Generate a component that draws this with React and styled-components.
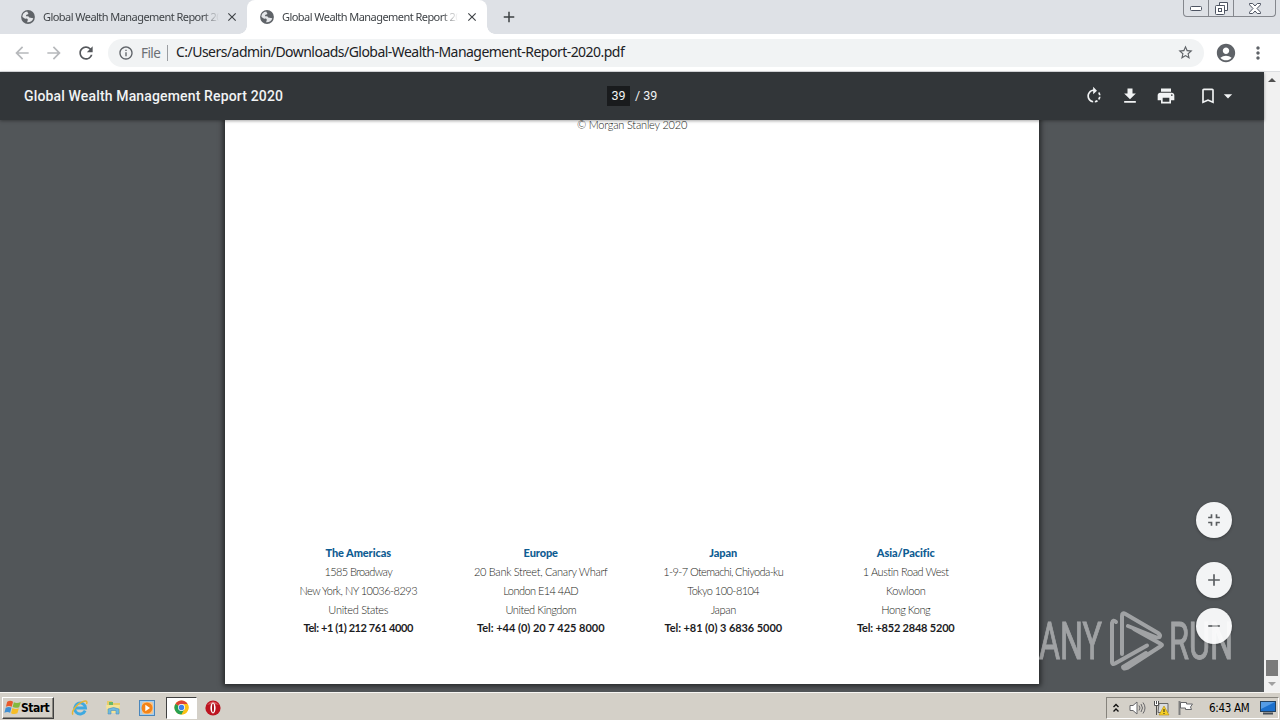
import React from "react";
import styled, { createGlobalStyle } from "styled-components";
import {
  MdArrowBack,
  MdArrowForward,
  MdRefresh,
  MdInfoOutline,
  MdStarBorder,
  MdAccountCircle,
  MdMoreVert,
  MdRotateRight,
  MdFileDownload,
  MdPrint,
  MdBookmarkBorder,
  MdArrowDropDown,
  MdFullscreenExit,
  MdAdd,
  MdRemove,
  MdClose
} from "react-icons/md";

const GlobalStyle = createGlobalStyle`
  * {
    box-sizing: border-box;
  }

  body {
    margin: 0;
    overflow: hidden;
  }

  svg {
    display: block;
    flex: none;
  }
`;

const Screen = styled.div`
  display: flex;
  flex-direction: column;
  width: 1280px;
  height: 720px;
  font-family: "Noto Sans", sans-serif;
  background: #525659;
`;

const TabStrip = styled.div`
  display: flex;
  height: 34px;
  background: #dee1e6;
`;

const Tab = styled.div`
  position: relative;
  display: flex;
  align-items: center;
  width: ${props => props.$width}px;
  padding: 0 8px 0 ${props => props.$left}px;
  color: #3f4347;
  background: ${props => (props.$active ? "#fff" : "transparent")};
  border-radius: 8px 8px 0 0;

  &::before,
  &::after {
    content: "";
    display: ${props => (props.$active ? "block" : "none")};
    position: absolute;
    bottom: 0;
    width: 8px;
    height: 8px;
  }

  &::before {
    left: -8px;
    background: radial-gradient(circle at 0 0, transparent 7.5px, #fff 8px);
  }

  &::after {
    right: -8px;
    background: radial-gradient(circle at 100% 0, transparent 7.5px, #fff 8px);
  }
`;

const TabTitle = styled.span`
  flex: 1;
  margin: 0 6px 0 8px;
  overflow: hidden;
  white-space: nowrap;
  font-size: 11px;
  letter-spacing: -0.55px;
  line-height: 18px;
  mask-image: linear-gradient(to right, #000 160px, transparent 176px);
`;

const NewTab = styled.div`
  display: flex;
  align-items: center;
  margin-left: 13px;
  color: #3c4043;
`;

const WindowButtons = styled.div`
  display: flex;
  width: 93px;
  height: 17px;
  margin: 0 4px 0 auto;
  border: 1px solid #84878d;
  border-top: 0;
  border-radius: 0 0 4px 4px;
`;

const WindowButton = styled.div`
  display: flex;
  align-items: center;
  justify-content: center;
  width: ${props => props.$width}px;
  border-right: ${props => (props.$last ? "0" : "1px solid #84878d")};
`;

const Toolbar = styled.div`
  display: flex;
  align-items: center;
  height: 38px;
  padding: 0 12px;
  color: #5f6368;
  background: #fff;
  border-bottom: 1px solid #dcdee1;
`;

const NavButton = styled.div`
  width: 20px;
  margin-right: 12px;
  color: ${props => (props.$disabled ? "#b7b9bc" : "#55585c")};
`;

const AddressBar = styled.div`
  display: flex;
  align-items: center;
  width: 1096px;
  height: 28px;
  padding: 0 10px;
  border-radius: 14px;
  background: #f1f3f4;
  font-size: 14px;
`;

const Scheme = styled.span`
  width: 19px;
  margin-left: 7px;
  color: #6b6f74;
  font-size: 13.5px;
  letter-spacing: -0.6px;
`;

const Separator = styled.span`
  width: 1px;
  height: 16px;
  margin: 0 8px 0 7px;
  background: #9a9da1;
`;

const Url = styled.span`
  flex: 1;
  color: #202124;
  white-space: nowrap;
  line-height: 20px;
  padding-bottom: 1px;
  letter-spacing: -0.53px;
`;

const Account = styled.div`
  margin: 0 11px;
`;

const Viewer = styled.div`
  display: flex;
  height: 620px;
`;

const ViewerMain = styled.div`
  position: relative;
  display: flex;
  flex-direction: column;
  width: 1264px;
`;

const PdfBar = styled.div`
  z-index: 1;
  display: grid;
  grid-template-columns: 607px 1fr auto;
  align-items: center;
  height: 48px;
  padding-right: 26px;
  color: #f1f3f4;
  background: #323639;
  box-shadow: 0 1px 3px rgba(0, 0, 0, 0.35);
  font-family: Roboto, sans-serif;
`;

const PdfTitle = styled.div`
  padding-left: 24px;
  font-size: 14px;
  font-weight: 500;
  letter-spacing: 0.15px;
`;

const PageSelector = styled.div`
  display: flex;
  align-items: center;
  font-size: 12.5px;
  line-height: 20px;
`;

const PageNumber = styled.span`
  width: 23px;
  margin-right: 5px;
  text-align: center;
  background: #191b1d;
`;

const PageCount = styled.span`
  padding-bottom: 1px;
`;

const PdfActions = styled.div`
  display: flex;
  align-items: center;
`;

const Action = styled.div`
  margin-left: ${props => props.$gap}px;
`;

const Document = styled.div`
  height: 572px;
  overflow: hidden;
  padding: 0 225px 8px;
  background: #525659;
`;

const Page = styled.div`
  display: flex;
  flex-direction: column;
  justify-content: space-between;
  width: 814px;
  height: 564px;
  padding: 0 42px 46px;
  color: #1d1e20;
  background: #fff;
  box-shadow: 0 0 5px 2px rgba(0, 0, 0, 0.55);
  font-family: Lato, sans-serif;
  font-size: 11px;
  font-weight: 300;
  text-align: center;
`;

const Copyright = styled.div`
  height: 20px;
  line-height: 9px;
  letter-spacing: -0.2px;
`;

const Offices = styled.div`
  display: grid;
  grid-template-columns: repeat(4, 182.5px);
`;

const Office = styled.div`
  line-height: 18.7px;
  white-space: nowrap;
`;

const Region = styled.div`
  color: #0e5c92;
  font-weight: 900;
  letter-spacing: -0.1px;
`;

const Address = styled.div`
  letter-spacing: ${props => props.$spacing}px;
`;

const Phone = styled.div`
  color: #1c1c1e;
  font-weight: 700;
  letter-spacing: ${props => props.$spacing}px;
`;

const ZoomControls = styled.div`
  position: absolute;
  right: 32px;
  bottom: 48px;
  display: flex;
  flex-direction: column;
  gap: 10px;
`;

const ZoomButton = styled.div`
  display: flex;
  align-items: center;
  justify-content: center;
  width: 36px;
  height: 36px;
  margin-bottom: ${props => (props.$spaced ? 14 : 0)}px;
  border-radius: 50%;
  color: #5a5d60;
  background: #f3f4f5;
  box-shadow: 0 1px 3px rgba(0, 0, 0, 0.3);
`;

const WatermarkBox = styled.div`
  position: absolute;
  left: 1036px;
  top: 535px;
`;

const Scrollbar = styled.div`
  display: flex;
  flex-direction: column;
  align-items: center;
  width: 16px;
  background: #f1f1f1;
`;

const Track = styled.div`
  display: flex;
  align-items: flex-end;
  flex: 1;
  width: 12px;
`;

const Thumb = styled.div`
  width: 12px;
  height: 16px;
  background: #7b7b7b;
`;

const ScrollArrow = styled.div`
  display: flex;
  align-items: center;
  height: 16px;
`;

const Taskbar = styled.div`
  display: flex;
  align-items: center;
  height: 28px;
  padding: 3px 1px 1px 2px;
  background: #d4d0c8;
  border-top: 1px solid #f6f5f2;
`;

const StartButton = styled.div`
  display: flex;
  align-items: center;
  width: 52px;
  height: 22px;
  padding-left: 1px;
  border: 1px solid;
  border-color: #fff #404040 #404040 #fff;
  box-shadow: inset -1px -1px #8a8780;
  color: #000;
  font: bold 12px "DejaVu Sans Condensed", "DejaVu Sans", sans-serif;
  letter-spacing: -0.5px;
`;

const QuickLaunch = styled.div`
  display: flex;
  align-items: center;
  margin-left: 9px;
`;

const Launcher = styled.div`
  display: flex;
  align-items: center;
  justify-content: center;
  width: ${props => (props.$active ? 31 : 33.5)}px;
  height: 22px;
  margin-left: ${props => (props.$active ? 2 : 0)}px;
  background: ${props => (props.$active ? "#fff" : "transparent")};
  border: ${props => (props.$active ? "1px solid" : "0")};
  border-color: #404040 #fff #fff #404040;
`;

const Tray = styled.div`
  display: flex;
  align-items: center;
  width: 173px;
  height: 22px;
  margin-left: auto;
  padding-left: 6px;
  border: 1px solid;
  border-color: #86837c #fff #fff #86837c;
`;

const TrayIcon = styled.div`
  margin-right: ${props => props.$gap}px;
`;

const Clock = styled.span`
  width: 42px;
  margin-right: 9px;
  color: #000;
  font: 11.5px "DejaVu Sans Condensed", "DejaVu Sans", sans-serif;
  letter-spacing: -0.3px;
  white-space: nowrap;
`;

const offices = [
  {
    region: "The Americas",
    address: [
      { text: "1585 Broadway", spacing: -0.6 },
      { text: "New York, NY 10036-8293", spacing: -0.52 },
      { text: "United States", spacing: -0.3 }
    ],
    phone: "Tel: +1 (1) 212 761 4000",
    phoneSpacing: -0.4
  },
  {
    region: "Europe",
    address: [
      { text: "20 Bank Street, Canary Wharf", spacing: -0.3 },
      { text: "London E14 4AD", spacing: -0.55 },
      { text: "United Kingdom", spacing: -0.45 }
    ],
    phone: "Tel: +44 (0) 20 7 425 8000",
    phoneSpacing: -0.02
  },
  {
    region: "Japan",
    address: [
      { text: "1-9-7 Otemachi, Chiyoda-ku", spacing: -0.62 },
      { text: "Tokyo 100-8104", spacing: -0.55 },
      { text: "Japan", spacing: -0.4 }
    ],
    phone: "Tel: +81 (0) 3 6836 5000",
    phoneSpacing: -0.06
  },
  {
    region: "Asia/Pacific",
    address: [
      { text: "1 Austin Road West", spacing: -0.42 },
      { text: "Kowloon", spacing: -0.3 },
      { text: "Hong Kong", spacing: -0.5 }
    ],
    phone: "Tel: +852 2848 5200",
    phoneSpacing: -0.2
  }
];

const Globe = () => (
  <svg width="14" height="14" viewBox="0 0 14 14">
    <circle cx="7" cy="7" r="6.9" fill="#5f6368" />
    <path
      d="M6.2 1.6c-2.9.4-4.9 2.6-4.7 5.4l2.6 1.8 1.9-.3.9 1.3-.8 2.5c2.8.4 5.5-1.4 6.2-4.1L10.8 8 8.2 7.6 7.3 6.2H5.1V4.9L7.5 4z"
      fill="#e4e6e9"
    />
  </svg>
);

const MinimizeGlyph = () => (
  <svg width="12" height="5" viewBox="0 0 12 5">
    <rect x=".5" y=".5" width="11" height="4" rx="1" fill="#fff" stroke="#4d5462" />
  </svg>
);

const RestoreGlyph = () => (
  <svg width="13" height="13" viewBox="0 0 13 13" fill="#fff" stroke="#4d5462">
    <path d="M4.5.5h8v8h-3v-5h-5z" />
    <rect x=".5" y="3.5" width="9" height="9" rx="1" />
    <rect x="3.5" y="6.5" width="3" height="3" />
  </svg>
);

const CloseGlyph = () => (
  <svg width="12" height="11" viewBox="0 0 12 11">
    <path
      d="M.5.5h3.2L6 3 8.3.5h3.2v1.3L8 5.5l3.5 3.7v1.3H8.3L6 8l-2.3 2.5H.5V9.2L4 5.5.5 1.8z"
      fill="#fff"
      stroke="#4d5462"
    />
  </svg>
);

const WindowsFlag = () => (
  <svg width="17" height="17" viewBox="0 0 16 16">
    <path d="M3 2.500Q6 .8 8.500 2.500L7.300 7.200Q4.500 5.800 1.800 7.300z" fill="#e8592b" />
    <path d="M9.300 3Q12 4.400 15.800 2.800L14.300 7.700Q11 9 8.100 7.600z" fill="#83b93e" />
    <path d="M1.600 8.200Q4.500 6.800 7 8.100L5.800 13Q3.200 11.600.4 13z" fill="#3f8fd3" />
    <path d="M7.900 8.500Q11 10 14 8.700L12.600 13.500Q9.500 15 6.600 13.400z" fill="#f6bd26" />
  </svg>
);

const InternetExplorer = () => (
  <svg width="18" height="18" viewBox="0 0 18 18" fill="none">
    <path d="M14.2 11.6A5.5 5.5 0 1 1 14.6 9H5" stroke="#3fa9e0" strokeWidth="2.8" />
    <path d="M2.2 15.5C-1 14 6 4 13 2.2c3-.7 3.500.8 2.500 2.800" stroke="#e5b536" strokeWidth="1.5" />
  </svg>
);

const Explorer = () => (
  <svg width="17" height="17" viewBox="0 0 17 17">
    <path d="M2 2h5l1 2h7v10H2z" fill="#e8cc69" />
    <path d="M4 3h4v4H4z" fill="#68b869" />
    <path d="M1 6h14l-1 8H2z" fill="#f5e396" />
    <path d="M3 15v-5q5.500-3 11 0v5h-3v-3.500H6V15z" fill="#70b9df" stroke="#4d92bd" strokeWidth=".6" />
  </svg>
);

const MediaPlayer = () => (
  <svg width="16" height="16" viewBox="0 0 16 16">
    <rect x=".5" y=".5" width="15" height="15" fill="#a6cdec" stroke="#4a86bb" />
    <rect x="3" y="2" width="11" height="12" rx="2" fill="#f8c48a" />
    <circle cx="8" cy="8" r="5.5" fill="#f48418" />
    <path d="M6.300 4.800v6.400L11 8z" fill="#fff" />
  </svg>
);

const Chrome = () => (
  <svg width="15" height="15" viewBox="0 0 16 16">
    <circle cx="8" cy="8" r="7.5" fill="#fbc116" />
    <path d="M8 8L1.500 4.200A7.500 7.500 0 0 1 14.500 4.200z" fill="#dd4436" />
    <path d="M8 8L1.500 4.200A7.500 7.500 0 0 0 8 15.500l3-5.500z" fill="#28a052" />
    <path d="M8 4.200h6.500A7.500 7.500 0 0 1 8 15.500L11.300 10z" fill="#fbc116" />
    <circle cx="8" cy="8" r="3.7" fill="#fff" />
    <circle cx="8" cy="8" r="2.9" fill="#3f80e8" />
  </svg>
);

const Opera = () => (
  <svg width="16" height="16" viewBox="0 0 16 16">
    <circle cx="8" cy="8" r="7.6" fill="#bd1420" />
    <path d="M2 5Q8-2 14 5 8 3 2 5z" fill="#db5459" />
    <ellipse cx="8" cy="8" rx="2.6" ry="5.4" fill="#fff" />
    <ellipse cx="8" cy="8" rx="1" ry="4.4" fill="#a6101b" />
  </svg>
);

const Speaker = () => (
  <svg width="17" height="16" viewBox="0 0 17 16" fill="none" stroke="#68686b">
    <path d="M1 5.500h3L8 2v12l-4-3.500H1z" fill="#fff" />
    <path d="M10 5.500q2 2.500 0 5M12 4q3 4 0 8M14 2.500q4 5.500 0 11" />
  </svg>
);

const Network = () => (
  <svg width="17" height="16" viewBox="0 0 17 16">
    <path d="M6 3.500h9v9H5z" fill="#d9dce0" stroke="#686868" />
    <path d="M1.500 1v4.500h4V1M3.500 1v3M3.500 6v9" fill="#fff" stroke="#4f4f4f" />
    <path d="M11 6l5 9H6z" fill="#f5cf25" stroke="#b58b0e" strokeWidth=".6" />
    <path d="M11 9v3M11 13v1" stroke="#222" />
  </svg>
);

const Flag = () => (
  <svg width="17" height="16" viewBox="0 0 17 16">
    <path d="M2.500 1v14" stroke="#7e7e7e" strokeWidth="2" />
    <path d="M3.500 2.500h6v1.500h6l-2 3 1 2.500H8.500V8h-5z" fill="#fff" stroke="#66676a" />
  </svg>
);

const Desktop = () => (
  <svg width="16" height="14" viewBox="0 0 16 14">
    <rect x=".5" y=".5" width="15" height="10" fill="#1c70cc" stroke="#24425f" />
    <path d="M1 1h14L1 8z" fill="#559ce5" />
    <path d="M3 12.500h10" stroke="#454d56" strokeWidth="2" />
  </svg>
);

const Watermark = () => (
  <svg width="200" height="72" viewBox="0 0 200 72" opacity=".45">
    <g fill="#fff" stroke="#fff" strokeWidth="1" fontFamily="Roboto, sans-serif" fontSize="51">
      <text x="3" y="52" textLength="63" lengthAdjust="spacingAndGlyphs">ANY</text>
      <text x="133" y="52" textLength="64" lengthAdjust="spacingAndGlyphs">RUN</text>
    </g>
    <g fill="none" stroke="#fff" strokeWidth="4" strokeLinecap="round" strokeLinejoin="round">
      <path d="M80 15q-3-3-4 1v39q0 3 3 1.500l32-18" />
      <path d="M86 47V9q0-4 3.500-2L122 26q3 2 1.500 4l-3 .5L92 19" />
      <path d="M98 22l27 15q2 1 0 2L91 61q-4 1.500-4-1l23-14" />
    </g>
  </svg>
);

export default class App extends React.Component {
  render() {
    return (
      <Screen>
        <GlobalStyle />
        <TabStrip>
          <Tab $width={247} $left={21}>
            <Globe />
            <TabTitle>Global Wealth Management Report 2020</TabTitle>
            <MdClose size={14} stroke="currentColor" />
          </Tab>
          <Tab $active $width={240} $left={13}>
            <Globe />
            <TabTitle>Global Wealth Management Report 2020</TabTitle>
            <MdClose size={14} stroke="currentColor" />
          </Tab>
          <NewTab>
            <MdAdd size={18} />
          </NewTab>
          <WindowButtons>
            <WindowButton $width={25}>
              <MinimizeGlyph />
            </WindowButton>
            <WindowButton $width={25}>
              <RestoreGlyph />
            </WindowButton>
            <WindowButton $width={41} $last>
              <CloseGlyph />
            </WindowButton>
          </WindowButtons>
        </TabStrip>
        <Toolbar>
          <NavButton $disabled>
            <MdArrowBack size={20} />
          </NavButton>
          <NavButton $disabled>
            <MdArrowForward size={20} />
          </NavButton>
          <NavButton>
            <MdRefresh size={20} />
          </NavButton>
          <AddressBar>
            <MdInfoOutline size={16} />
            <Scheme>File</Scheme>
            <Separator />
            <Url>C:/Users/admin/Downloads/Global-Wealth-Management-Report-2020.pdf</Url>
            <MdStarBorder size={17} />
          </AddressBar>
          <Account>
            <MdAccountCircle size={22} />
          </Account>
          <MdMoreVert size={20} />
        </Toolbar>
        <Viewer>
          <ViewerMain>
            <PdfBar>
              <PdfTitle>Global Wealth Management Report 2020</PdfTitle>
              <PageSelector>
                <PageNumber>39</PageNumber>
                <PageCount>/ 39</PageCount>
              </PageSelector>
              <PdfActions>
                <MdRotateRight size={20} />
                <Action $gap={16}>
                  <MdFileDownload size={20} />
                </Action>
                <Action $gap={16}>
                  <MdPrint size={20} />
                </Action>
                <Action $gap={22}>
                  <MdBookmarkBorder size={20} />
                </Action>
                <MdArrowDropDown size={20} />
              </PdfActions>
            </PdfBar>
            <Document>
              <Page>
                <Copyright>© Morgan Stanley 2020</Copyright>
                <Offices>
                  {offices.map(office => (
                    <Office key={office.region}>
                      <Region>{office.region}</Region>
                      {office.address.map(line => (
                        <Address key={line.text} $spacing={line.spacing}>
                          {line.text}
                        </Address>
                      ))}
                      <Phone $spacing={office.phoneSpacing}>{office.phone}</Phone>
                    </Office>
                  ))}
                </Offices>
              </Page>
            </Document>
            <ZoomControls>
              <ZoomButton $spaced>
                <MdFullscreenExit size={20} />
              </ZoomButton>
              <ZoomButton>
                <MdAdd size={20} />
              </ZoomButton>
              <ZoomButton>
                <MdRemove size={20} />
              </ZoomButton>
            </ZoomControls>
            <WatermarkBox>
              <Watermark />
            </WatermarkBox>
          </ViewerMain>
          <Scrollbar>
            <ScrollArrow>
              <svg width="8" height="4" viewBox="0 0 8 4">
                <path d="M0 4l4-4 4 4z" fill="#505050" />
              </svg>
            </ScrollArrow>
            <Track>
              <Thumb />
            </Track>
            <ScrollArrow>
              <svg width="8" height="4" viewBox="0 0 8 4">
                <path d="M0 0h8L4 4z" fill="#a0a0a0" />
              </svg>
            </ScrollArrow>
          </Scrollbar>
        </Viewer>
        <Taskbar>
          <StartButton>
            <WindowsFlag />
            Start
          </StartButton>
          <QuickLaunch>
            <Launcher>
              <InternetExplorer />
            </Launcher>
            <Launcher>
              <Explorer />
            </Launcher>
            <Launcher>
              <MediaPlayer />
            </Launcher>
            <Launcher $active>
              <Chrome />
            </Launcher>
            <Launcher>
              <Opera />
            </Launcher>
          </QuickLaunch>
          <Tray>
            <TrayIcon $gap={10}>
              <svg width="6" height="10" viewBox="0 0 6 10" fill="none" stroke="#111" strokeWidth="1.4">
                <path d="M.5 4L3 1.500 5.500 4M.5 8.500L3 6l2.500 2.500" />
              </svg>
            </TrayIcon>
            <TrayIcon $gap={7}>
              <Speaker />
            </TrayIcon>
            <TrayIcon $gap={7}>
              <Network />
            </TrayIcon>
            <TrayIcon $gap={15}>
              <Flag />
            </TrayIcon>
            <Clock>6:43 AM</Clock>
            <Desktop />
          </Tray>
        </Taskbar>
      </Screen>
    );
  }
}
